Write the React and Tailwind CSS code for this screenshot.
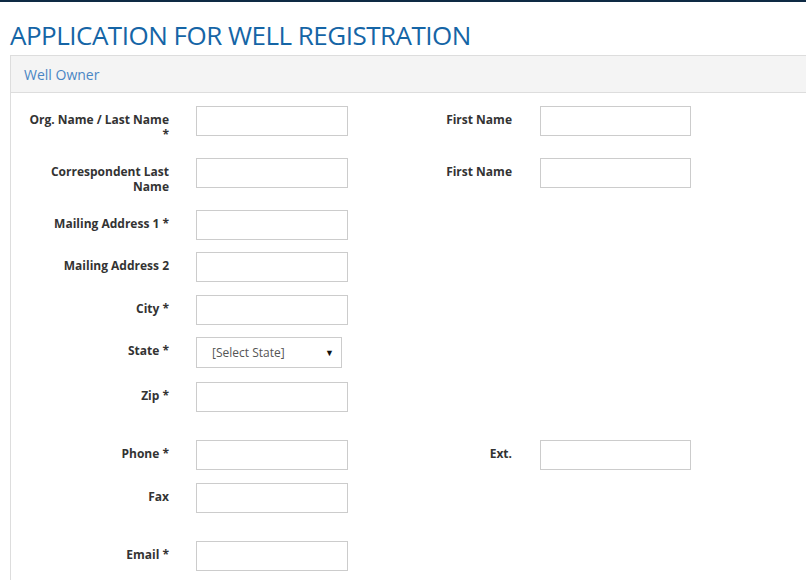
import React from 'react';

const rows = [
  { label: 'Org. Name / Last Name *', right: 'First Name', mt: 'mt-[13px]', h: 'h-[52px]' },
  { label: 'Correspondent Last Name', right: 'First Name', h: 'h-[52px]' },
  { label: 'Mailing Address 1 *', h: 'h-[42px]' },
  { label: 'Mailing Address 2', h: 'h-[43px]' },
  { label: 'City *', h: 'h-[42px]' },
  { label: 'State *', select: true, h: 'h-[45px]' },
  { label: 'Zip *', h: 'h-[58px]' },
  { label: 'Phone *', right: 'Ext.', h: 'h-[43px]' },
  { label: 'Fax', h: 'h-[58px]' },
  { label: 'Email *', h: 'h-[43px]' },
];

function TextBox({ w = 'w-[152px]' }) {
  return <input type="text" className={`${w} h-[30px] border border-[#cccccc] bg-white outline-none`} />;
}

export default function App() {
  return (
    <div className="w-[806px] h-[580px] overflow-hidden bg-white font-['Open_Sans',sans-serif]">
      <div className="h-[2px] bg-[#0e2a44]" />
      <h1 className="ml-[10px] mt-[15px] text-[26px] leading-[36px] text-[#1565a6] tracking-[-0.5px]">
        APPLICATION FOR WELL REGISTRATION
      </h1>
      <div className="ml-[10px] mt-[2px] border-l border-t border-[#dddddd] w-[820px]">
        <div className="h-[37px] bg-[#f4f4f4] border-b border-[#dddddd] pl-[13px] flex items-center text-[14px] text-[#4a86c4]">
          Well Owner
        </div>
        <div className="pb-10">
          {rows.map((r, i) => (
            <div key={i} className={`flex items-start ${r.h} ${r.mt || ''}`}>
              <div className="w-[159px] pl-[18px] pr-[1px] text-right text-[12px] font-bold leading-[15px] text-[#333333] pt-[6px]">
                {r.label}
              </div>
              <div className="ml-[26px]">
                {r.select ? (
                  <div className="w-[146px] h-[31px] border border-[#cccccc] flex items-center justify-between pl-[15px] pr-[7px] text-[12px] text-[#555555]">
                    <span>[Select State]</span>
                    <span className="text-[9px] text-[#111111]">▼</span>
                  </div>
                ) : (
                  <TextBox />
                )}
              </div>
              {r.right && (
                <>
                  <div className="w-[164px] text-right text-[12px] font-bold leading-[15px] text-[#333333] pt-[6px]">
                    {r.right}
                  </div>
                  <div className="ml-[28px]">
                    <TextBox w="w-[151px]" />
                  </div>
                </>
              )}
            </div>
          ))}
        </div>
      </div>
    </div>
  );
}
